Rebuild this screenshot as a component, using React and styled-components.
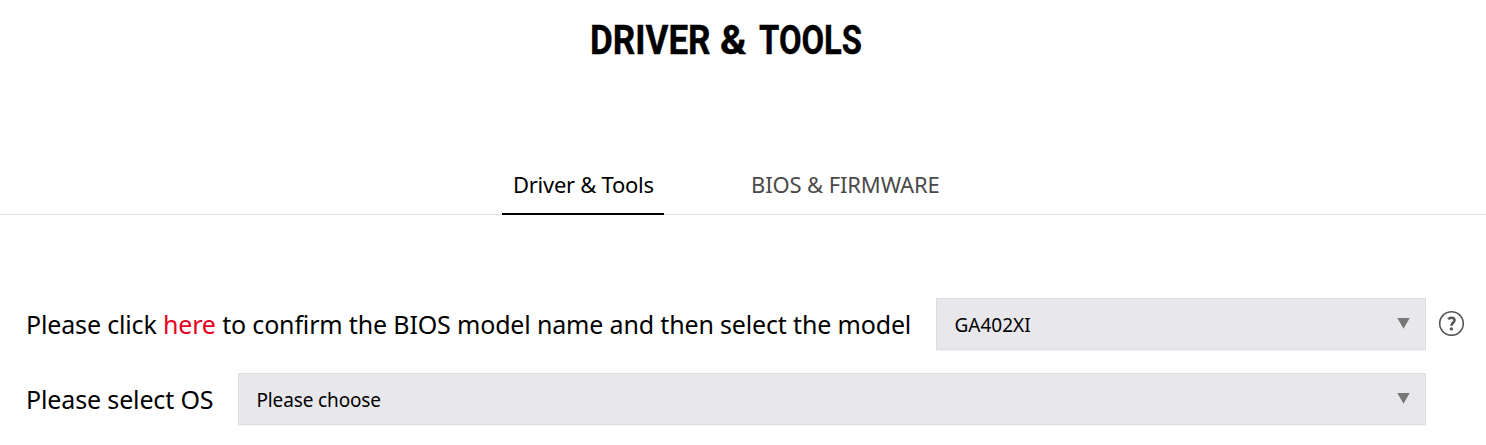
import React from "react";
import styled, { createGlobalStyle } from "styled-components";

const GlobalStyle = createGlobalStyle`
  * { box-sizing: border-box; }
  body {
    margin: 0;
    background: #fff;
    color: #000;
    font-family: "Noto Sans", "Open Sans", sans-serif;
    overflow: hidden;
  }
`;

const Page = styled.main`
  width: 1486px;
  height: 445px;
`;

const Title = styled.h1`
  display: flex;
  margin: 0;
  height: 158px;
  padding: 16px 0 0 589.5px;
  font: 700 41px/48px Roboto, sans-serif;
  white-space: pre;
  -webkit-text-stroke: 0.4px #000;
`;

const TitleWord = styled.span`
  flex: none;
  width: ${(p) => p.$width}px;
  transform: scaleX(${(p) => p.$scale});
  transform-origin: 0 0;
`;

const Tabs = styled.nav`
  display: flex;
  gap: 76px;
  height: 57px;
  padding-left: 502px;
  border-bottom: 1px solid #dedede;
`;

const Tab = styled.button`
  width: ${(p) => p.$width}px;
  height: 57px;
  padding: 0 0 2px 11px;
  border: 0;
  border-bottom: 2px solid ${(p) => (p.$active ? "#000" : "transparent")};
  background: none;
  color: ${(p) => (p.$active ? "#000" : "#4a4a4a")};
  font: 400 22px/53px "Noto Sans", sans-serif;
  letter-spacing: ${(p) => p.$spacing}px;
  text-align: left;
  white-space: nowrap;
`;

const Form = styled.section`
  display: flex;
  flex-direction: column;
  gap: 22px;
  padding: 83px 0 0 26px;
`;

const Row = styled.div`
  display: flex;
  height: 53px;
`;

const Label = styled.label`
  flex: none;
  width: ${(p) => p.$width}px;
  font-size: 25px;
  line-height: 52px;
  letter-spacing: ${(p) => p.$spacing}px;
  white-space: nowrap;
`;

const Link = styled.a`
  color: #e60021;
`;

const Select = styled.div`
  display: flex;
  flex: none;
  justify-content: space-between;
  width: ${(p) => p.$width}px;
  height: 52px;
  padding: 0 15px 0 17.5px;
  border: 1px solid #dedede;
  box-shadow: 0 1px #f4f4f4;
  background: #e8e7ec;
  font-size: 19px;
  line-height: 52px;
  letter-spacing: ${(p) => p.$spacing}px;
`;

const Arrow = styled.svg`
  width: 13px;
  height: 11px;
  margin-top: 19px;
  fill: #777;
`;

const Help = styled.svg`
  width: 26px;
  height: 26px;
  margin: 12px 0 0 12px;
  fill: none;
  stroke: #555;
`;

const Dropdown = ({ width, spacing, children }) => (
  <Select $width={width} $spacing={spacing}>
    <span>{children}</span>
    <Arrow viewBox="0 0 13 11"><path d="M.3 0h12.4L6.5 10.7z" /></Arrow>
  </Select>
);

export default function App() {
  return (
    <Page>
      <GlobalStyle />
      <Title>
        <TitleWord $width={130.5} $scale={0.855}>DRIVER </TitleWord>
        <TitleWord $width={38.5} $scale={0.98}>&amp; </TitleWord>
        <TitleWord $width={103} $scale={0.8}>TOOLS</TitleWord>
      </Title>
      <Tabs>
        <Tab $active $width={162} $spacing={-0.27}>Driver &amp; Tools</Tab>
        <Tab $width={210} $spacing={-0.13}>BIOS &amp; FIRMWARE</Tab>
      </Tabs>
      <Form>
        <Row>
          <Label $width={910} $spacing={-0.16}>
            Please click <Link>here</Link> to confirm the BIOS model name and then select the model
          </Label>
          <Dropdown width={490} spacing={0}>GA402XI</Dropdown>
          <Help viewBox="0 0 26 26">
            <circle cx="13.5" cy="13.5" r="11.8" strokeWidth="1.6" />
            <path d="M10.3 9.2C11.2 8.1 12.3 7.7 13.5 7.7c1.8 0 3 .9 3 2.5 0 2.6-3.1 2.5-3.1 5.5" strokeWidth="2.6" />
            <circle cx="13.4" cy="18.9" r="1.7" fill="#555" stroke="none" />
          </Help>
        </Row>
        <Row>
          <Label $width={212} $spacing={-0.14}>Please select OS</Label>
          <Dropdown width={1188} spacing={-0.14}>Please choose</Dropdown>
        </Row>
      </Form>
    </Page>
  );
}
